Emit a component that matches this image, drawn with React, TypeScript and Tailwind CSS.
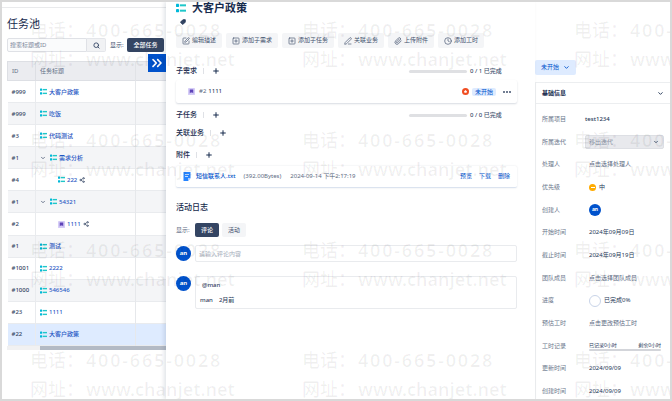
import React from "react";
import {
  ChevronDown,
  ChevronsRight,
  Clock,
  Paperclip,
  PenLine,
  Plus,
  Search,
  Share2,
  SquarePen,
  SquarePlus,
  Tag,
} from "lucide-react";

const FONT = "font-['Noto_Sans','Noto_Sans_CJK_SC',sans-serif]";

function ListIcon({ className = "size-[7px]" }: { className?: string }) {
  return (
    <svg viewBox="0 0 12 12" className={`${className} shrink-0`} aria-hidden="true">
      <rect x="0" y="1" width="3.6" height="3.8" rx="0.5" fill="#00b8d9" />
      <rect x="4.6" y="1.6" width="7.4" height="2.4" fill="#1fc7c9" />
      <rect x="0" y="7.2" width="3.6" height="3.8" rx="0.5" fill="#00b8d9" />
      <rect x="4.6" y="8" width="7.4" height="2.4" fill="#1fc7c9" />
    </svg>
  );
}

function TaskIcon() {
  return (
    <svg viewBox="0 0 12 12" className="size-[7px] shrink-0" aria-hidden="true">
      <rect width="12" height="12" rx="1.5" fill="#d5ccf7" />
      <path d="M3 2.5h6v7L7.4 7.6H4.6L3 9.5z" fill="#5e43b8" />
    </svg>
  );
}

type Task = {
  id: string;
  title: string;
  open?: boolean;
  child?: boolean;
  kind?: "task";
  selected?: boolean;
};

const tasks: Task[] = [
  { id: "#999", title: "大客户政策" },
  { id: "#999", title: "吃饭" },
  { id: "#3", title: "代码测试" },
  { id: "#1", title: "需求分析", open: true },
  { id: "#4", title: "222", child: true },
  { id: "#1", title: "54321", open: true },
  { id: "#2", title: "1111", child: true, kind: "task" },
  { id: "#1", title: "测试" },
  { id: "#1001", title: "2222" },
  { id: "#1000", title: "546546" },
  { id: "#23", title: "1111" },
  { id: "#22", title: "大客户政策", selected: true },
];

function TaskPool() {
  return (
    <aside className="relative w-[164px] shrink-0 pt-[5px]">
      <div className="border-t border-[#e9eaec] pl-[5px] pt-2">
        <h1 className="text-[11px] leading-[16px] text-[#172b4d]">任务池</h1>
        <div className="mt-[6px] flex h-[14px] items-center pr-[2px]">
          <input
            aria-label="搜索标题或ID"
            placeholder="搜索标题或ID"
            className="h-full w-[80px] rounded-l-xs border border-[#dfe1e6] bg-[#fafbfc] px-[2px] text-[6px] placeholder:text-[#7a869a]"
          />
          <button
            aria-label="搜索"
            className="flex h-full w-[19px] items-center justify-center rounded-r-xs border border-l-0 border-[#e4e6ea] bg-[#f1f2f4]"
          >
            <Search className="size-[7px] text-[#344563]" strokeWidth={3} />
          </button>
          <span className="ml-1 text-[6px] text-[#42526e]">显示:</span>
          <button className="ml-auto h-full w-[37px] rounded-xs bg-[#344563] text-[6px] font-medium text-white">
            全部任务
          </button>
        </div>
        <table className="mt-[9px] h-[285px] w-full table-fixed border-collapse text-left text-[6px] leading-[8px]">
          <thead>
            <tr className="h-[19px] border border-r-0 border-[#dddfe4] bg-[#ebecf0] text-[#5e6c84]">
              <th className="w-[28px] border-r border-[#dddfe4] pl-1 font-normal">ID</th>
              <th className="border-r border-[#e1e3e7] pl-1 font-normal">任务标题</th>
              <th className="w-[31px]" />
            </tr>
          </thead>
          <tbody>
            {tasks.map((t, i) => (
              <tr
                key={i}
                className={`h-[22px] border-b border-[#e9ebee] ${
                  t.selected ? "bg-[#deebff]" : i % 2 ? "bg-[#f4f5f7]" : "bg-white"
                }`}
              >
                <td className="border-r border-[#e9ebee] pl-1 font-medium text-[#344563]">{t.id}</td>
                <td className="border-r border-[#e6e8eb] pl-1">
                  <a
                    href="#"
                    className={`flex items-center gap-[2px] font-medium text-[#1f56c4] ${t.child ? "pl-[18px]" : ""}`}
                  >
                    {t.open && <ChevronDown className="mr-[2px] size-[6px] text-[#42526e]" strokeWidth={3} />}
                    {t.kind === "task" ? <TaskIcon /> : <ListIcon />}
                    {t.title}
                    {t.child && <Share2 className="size-[6px] text-[#172b4d]" strokeWidth={2} />}
                  </a>
                </td>
                <td />
              </tr>
            ))}
          </tbody>
        </table>
        <div className="flex h-1 bg-[#f1f1f2] pl-[33px]">
          <div className="flex-1 bg-[#b3bac5]" />
        </div>
      </div>
      <button
        aria-label="展开"
        className="absolute right-0 top-[52px] flex size-[18px] items-center justify-center bg-[#0052cc] text-white"
      >
        <ChevronsRight className="size-4" strokeWidth={2.5} />
      </button>
    </aside>
  );
}

const actions = [
  { label: "编辑描述", Icon: SquarePen },
  { label: "添加子需求", Icon: SquarePlus },
  { label: "添加子任务", Icon: SquarePlus },
  { label: "关联业务", Icon: PenLine },
  { label: "上传附件", Icon: Paperclip },
  { label: "添加工时", Icon: Clock },
];

function SectionHead({ title, done }: { title: string; done?: string }) {
  return (
    <div className="flex h-[10px] items-center">
      <h3 className="text-[7px] font-medium text-[#172b4d]">{title}</h3>
      <span className="ml-[6px] h-[6px] border-l border-[#dfe1e6]" />
      <button aria-label={`添加${title}`} className="ml-2 text-[#172b4d]">
        <Plus className="size-2" strokeWidth={3} />
      </button>
      {done && (
        <div className="ml-auto mr-3 flex items-center gap-[3px] text-[6px] text-[#42526e]">
          <span className="h-[3px] w-[58px] rounded-full bg-[#dfe0e3]" />
          <span className="w-[35px] whitespace-nowrap font-medium">{done} 已完成</span>
        </div>
      )}
    </div>
  );
}

function Avatar({ className }: { className: string }) {
  return (
    <span
      className={`flex shrink-0 items-center justify-center rounded-full bg-[#0052cc] font-bold text-white ${className}`}
    >
      an
    </span>
  );
}

function Detail() {
  return (
    <main className="relative min-w-0 flex-1 bg-white pl-[10px] pr-[18px] shadow-[-2px_0_4px_rgba(9,30,66,0.12)]">
      <div className="flex h-3 items-center gap-[6px]">
        <ListIcon className="size-[10px]" />
        <h2 className="text-[11px] font-bold leading-[12px] text-[#172b4d]">大客户政策</h2>
      </div>
      <div className="flex h-4 items-center pl-1">
        <Tag className="size-[6px] -scale-x-100 fill-[#344563] text-[#172b4d]" strokeWidth={2} />
      </div>
      <div className="mt-[3px] flex gap-1">
        {actions.map(({ label, Icon }) => (
          <button
            key={label}
            className="flex h-[15px] items-center gap-[2px] whitespace-nowrap rounded-xs bg-[#f4f5f7] px-[6px] text-[6px] text-[#42526e]"
          >
            <Icon className="size-2" />
            {label}
          </button>
        ))}
      </div>

      <div className="mt-[18px]">
        <SectionHead title="子需求" done="0 / 1" />
        <div className="mt-1 flex h-[23px] items-center rounded-xs pl-3 pr-[6px] text-[6px] shadow-[0_1px_2px_rgba(9,30,66,0.16)]">
          <TaskIcon />
          <span className="ml-1 text-[#5e6c84]">#2</span>
          <span className="ml-[2px] font-medium text-[#344563]">1111</span>
          <svg viewBox="0 0 14 14" className="ml-auto size-[7px]" aria-hidden="true">
            <circle cx="7" cy="7" r="7" fill="#f04e23" />
            <path d="M7 4l3 3-1 2.6H5L4 7z" fill="#fff" />
          </svg>
          <span className="ml-[3px] w-6 rounded-xs bg-[#deebff] text-center leading-[8px] text-[#0052cc]">
            未开始
          </span>
          <button aria-label="更多" className="ml-[7px] flex gap-px">
            <i className="size-[2px] rounded-full bg-[#42526e]" />
            <i className="size-[2px] rounded-full bg-[#42526e]" />
            <i className="size-[2px] rounded-full bg-[#42526e]" />
          </button>
        </div>
      </div>

      <div className="mt-[7px]">
        <SectionHead title="子任务" done="0 / 0" />
      </div>
      <div className="mt-2">
        <SectionHead title="关联业务" />
      </div>
      <div className="mt-3">
        <SectionHead title="附件" />
        <div className="mt-[6px] flex h-[22px] items-center rounded-xs border-b border-[#dbe3ef] pl-[7px] pr-[7px] text-[6px] text-[#5e6c84] shadow-[0_0_2px_rgba(9,30,66,0.12)]">
          <svg viewBox="0 0 16 18" className="h-[9px] w-2" aria-hidden="true">
            <path d="M1 0h14v12l-5 6H1z" fill="#2684ff" />
            <path d="M15 12l-5 6v-6z" fill="#a8cbff" />
            <path d="M4 5h8M4 9h6" stroke="#fff" strokeWidth="1.4" />
          </svg>
          <a href="#" className="ml-[5px] font-medium text-[#0052cc]">
            短信联系人.txt
          </a>
          <span className="ml-2">(392.00Bytes)</span>
          <time className="ml-[9px]">2024-09-14 下午2:17:19</time>
          <div className="ml-auto flex gap-[7px] text-[#0052cc]">
            <button>预览</button>
            <button>下载</button>
            <button>删除</button>
          </div>
        </div>
      </div>

      <h2 className="mt-[13px] text-[8px] font-medium leading-[12px] text-[#172b4d]">活动日志</h2>
      <div className="mt-[10px] flex h-[14px] items-center text-[6px]">
        <span className="w-[19px] text-[#5e6c84]">显示:</span>
        <button className="h-full w-6 rounded-xs bg-[#344563] font-medium text-white">评论</button>
        <button className="ml-[3px] h-full w-6 rounded-xs bg-[#f4f5f7] text-[#42526e]">活动</button>
      </div>
      <div className="mt-2 flex items-center gap-1">
        <Avatar className="size-[15px] text-[6px]" />
        <input
          aria-label="评论"
          placeholder="请输入评论内容"
          className="h-[17px] min-w-0 flex-1 rounded-xs border border-[#e9ebee] px-[3px] text-[6px] placeholder:text-[#a5adba]"
        />
      </div>
      <div className="mt-[14px] flex gap-1">
        <Avatar className="size-[15px] text-[6px]" />
        <div className="flex-1 rounded-xs border border-[#e9ebee] px-1 py-1 text-[6px] font-medium leading-[8px] text-[#344563]">
          <p className="pl-[2px]">@man</p>
          <p className="mt-[7px] flex gap-[6px]">
            <span>man</span>
            <span>2月前</span>
          </p>
        </div>
      </div>
    </main>
  );
}

const fields: { label: string; value: React.ReactNode }[] = [
  { label: "所属项目", value: <span className="font-medium">test1234</span> },
  {
    label: "所属迭代",
    value: (
      <span className="relative mr-[6px] block">
        <select
          id="iteration"
          className="block h-[14px] w-full appearance-none rounded-xs border border-[#dddfe4] bg-[#e8e9ed] pl-[3px] text-[#8993a4]"
        >
          <option>移出迭代</option>
        </select>
        <ChevronDown className="pointer-events-none absolute right-[5px] top-1 size-[6px]" strokeWidth={3} />
      </span>
    ),
  },
  { label: "处理人", value: <span className="pl-1 text-[#5e6c84]">点击选择处理人</span> },
  {
    label: "优先级",
    value: (
      <span className="flex items-center gap-[3px] pl-1">
        <span className="flex size-[7px] items-center justify-center rounded-full bg-[#ffab00]">
          <i className="h-px w-1 bg-white" />
        </span>
        中
      </span>
    ),
  },
  {
    label: "创建人",
    value: (
      <span className="block pl-1">
        <Avatar className="size-3 text-[5px]" />
      </span>
    ),
  },
  { label: "开始时间", value: <time className="pl-1">2024年09月09日</time> },
  { label: "截止时间", value: <time className="pl-1">2024年09月19日</time> },
  { label: "团队成员", value: <span className="pl-1 text-[#5e6c84]">点击选择团队成员</span> },
  {
    label: "进度",
    value: (
      <span className="flex items-center gap-[3px] pl-1">
        <i className="size-3 rounded-full border border-[#c9d4e8]" />
        已完成0%
      </span>
    ),
  },
  { label: "预估工时", value: <span className="pl-1 text-[#5e6c84]">点击更改预估工时</span> },
  {
    label: "工时记录",
    value: (
      <span className="mr-[9px] block pl-1 text-[5px] leading-[8px]">
        <span className="flex justify-between">
          <span>已记录0小时</span>
          <span>剩余0小时</span>
        </span>
        <span className="block h-[2px] rounded-full bg-[#d3d5da]" />
      </span>
    ),
  },
  { label: "更新时间", value: <time className="pl-1">2024/09/09</time> },
  { label: "创建时间", value: <time className="pl-1">2024/09/09</time> },
];

function Info() {
  return (
    <aside className="w-[135px] shrink-0 pt-[58px]">
      <button className="flex h-[15px] w-[41px] items-center gap-1 rounded-xs bg-[#deebff] pl-[6px] text-[6px] text-[#0052cc]">
        未开始
        <ChevronDown className="size-[7px]" strokeWidth={3} />
      </button>
      <section className="mt-[7px] border-l border-t border-[#eceef0] text-[6px]">
        <header className="flex h-[21px] items-center justify-between border-b border-[#eceef0] px-[6px]">
          <h3 className="font-bold text-[#172b4d]">基础信息</h3>
          <ChevronDown className="size-[7px] text-[#172b4d]" strokeWidth={3} />
        </header>
        <div className="mt-1 grid h-[295px] auto-rows-fr">
          {fields.map((f) => (
            <div key={f.label} className="grid grid-cols-[43px_1fr] items-center pl-[6px]">
              {f.label === "所属迭代" ? (
                <label htmlFor="iteration" className="text-[#6b778c]">
                  {f.label}
                </label>
              ) : (
                <span className="text-[#6b778c]">{f.label}</span>
              )}
              <div className="text-[#253858]">{f.value}</div>
            </div>
          ))}
        </div>
      </section>
    </aside>
  );
}

function Watermark() {
  return (
    <div
      aria-hidden="true"
      className="pointer-events-none absolute left-[28px] top-[14px] grid select-none auto-rows-[110px] grid-cols-[272px_272px_272px] text-[18px] font-semibold leading-[29px] text-black/6"
    >
      {Array.from({ length: 12 }, (_, i) => (
        <div key={i}>
          <p className="flex whitespace-nowrap">
            <span className="w-14 font-medium">电话：</span>
            <span className="tracking-widest">400-665-0028</span>
          </p>
          <p className="flex whitespace-nowrap">
            <span className="w-14 font-medium">网址：</span>
            <span>www.chanjet.net</span>
          </p>
        </div>
      ))}
    </div>
  );
}

export default function App() {
  return (
    <div className={`relative flex h-screen overflow-hidden border-2 border-[#d9d9d9] bg-white ${FONT}`}>
      <TaskPool />
      <Detail />
      <Info />
      <Watermark />
    </div>
  );
}
